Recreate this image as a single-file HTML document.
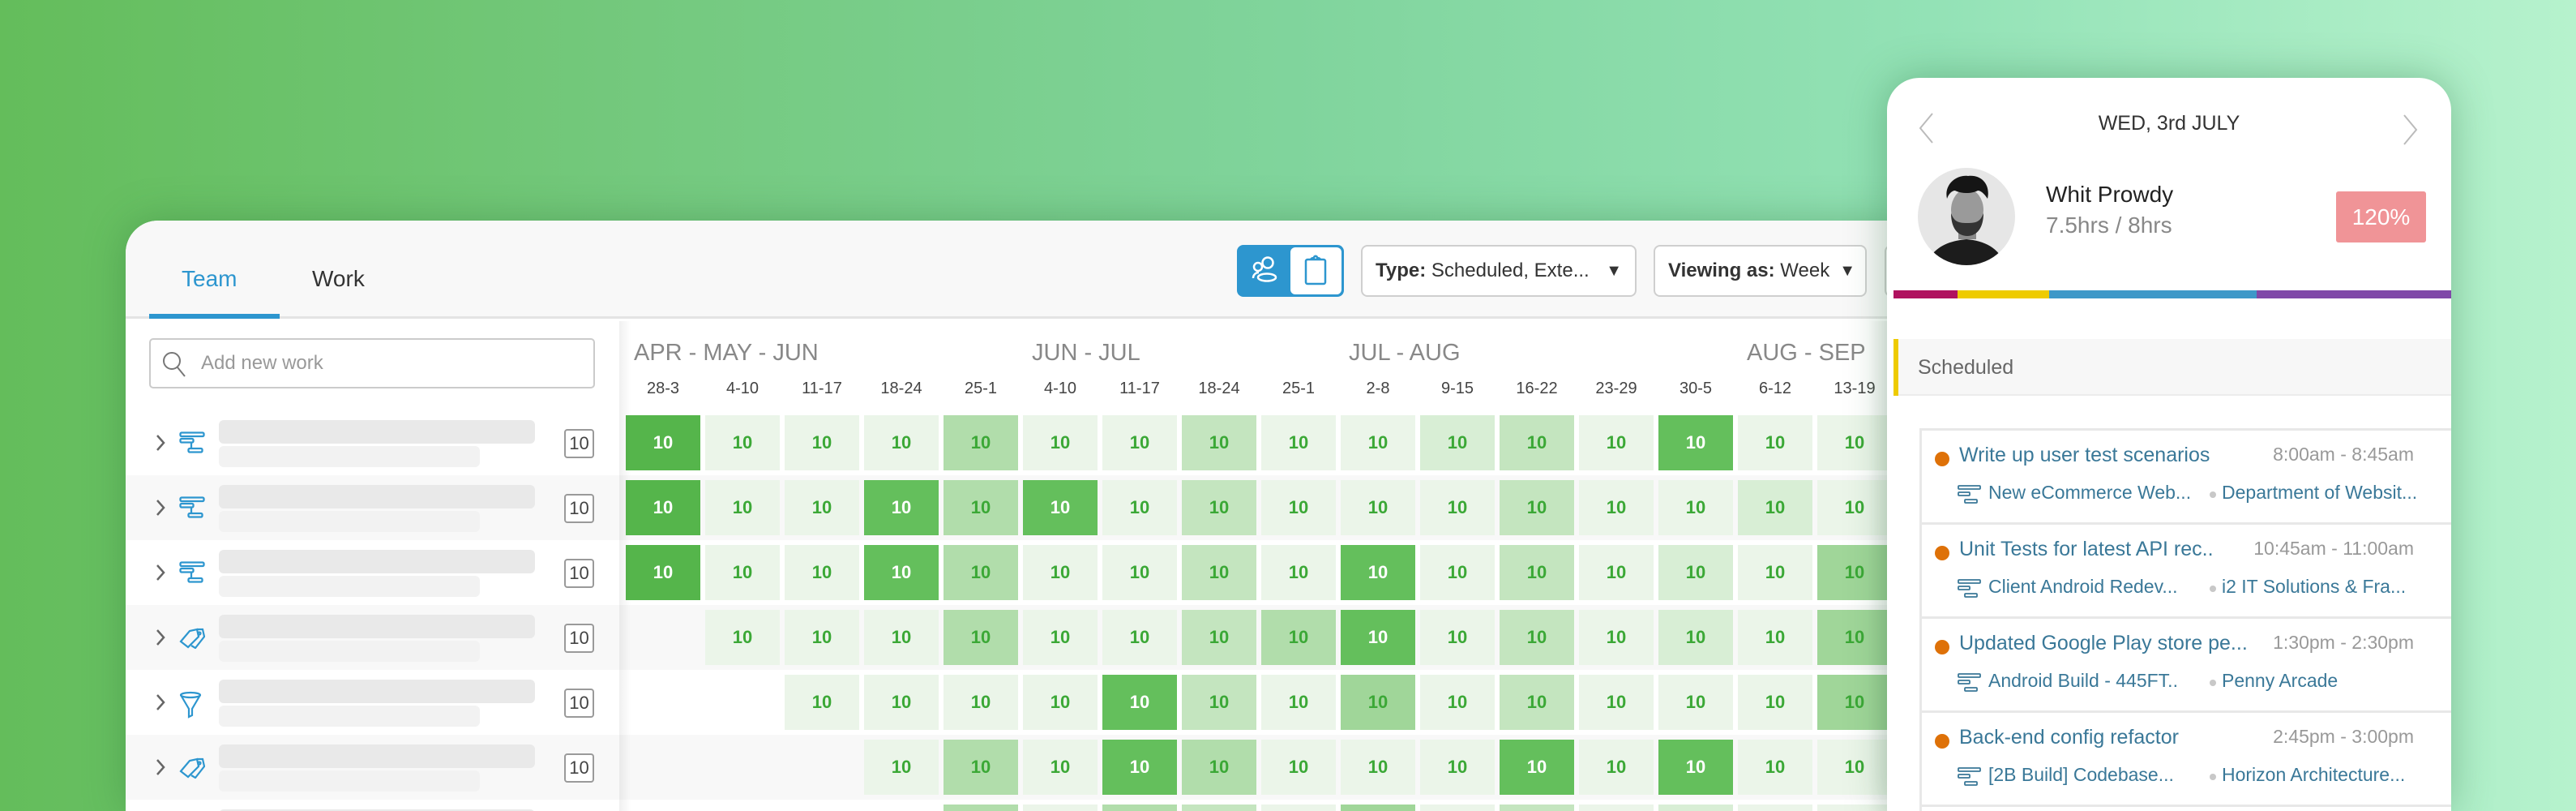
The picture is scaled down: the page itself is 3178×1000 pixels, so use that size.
<!DOCTYPE html>
<html><head><meta charset="utf-8">
<style>
*{margin:0;padding:0;box-sizing:border-box}
html,body{width:3178px;height:1000px;overflow:hidden}
body{position:relative;font-family:"Liberation Sans",sans-serif;background:linear-gradient(90deg,#64bd5b 0%,#74c97e 25%,#80d49c 50%,#93e2b6 75%,#b6f2cd 100%)}
.a{position:absolute}
#card{left:155px;top:272px;width:2200px;height:728px;background:#fff;border-radius:40px 0 0 0;overflow:hidden;box-shadow:0 0 50px rgba(40,110,50,.35)}
#hdr{left:0;top:0;width:2200px;height:121px;background:#f8f8f8;border-bottom:3px solid #e4e4e4}
.tab{font-size:28px;top:56px}
.row{left:0;width:2200px;height:80px}
.row.g{background:#f8f8f8}
.bar1{left:115px;top:12px;width:390px;height:29px;background:#e9e9e9;border-radius:6px}
.bar2{left:115px;top:44px;width:322px;height:26px;background:#f2f2f2;border-radius:6px}
.badge{left:541px;top:23px;width:37px;height:36px;border:2px solid #9a9a9a;border-radius:4px;font-size:22px;color:#444;text-align:center;line-height:32px;background:#fff}
.chev{left:36px;top:28px}
.ico{left:66px;top:26px}
#leftshade{left:609px;top:124px;width:14px;height:700px;background:linear-gradient(90deg,rgba(0,0,0,.06),rgba(0,0,0,0))}
.c{position:absolute;width:92px;height:68px;font-size:22px;font-weight:bold;text-align:center;line-height:68px;color:#3ba836}
.D{background:#55b54b;color:#fff}.G{background:#64bf5c;color:#fff}.M{background:#b1ddab}.N{background:#a0d699}.K{background:#c4e5bf}.J{background:#d8eed5}.L{background:#ebf5e9}
.mon{font-size:29px;color:#888;top:147px}
.wk{font-size:20px;color:#444;top:196px;width:98px;text-align:center}
.dd{top:30px;height:64px;border:2px solid #cfcfcf;border-radius:8px;background:#fff;font-size:24px;color:#333;line-height:60px;padding-left:16px;white-space:nowrap}
#panel{left:2328px;top:96px;width:696px;height:904px;background:#fff;border-radius:40px 40px 0 0;box-shadow:0 0 50px rgba(30,100,50,.35);overflow:hidden}
.it{left:40px;width:660px;height:116px;border-top:3px solid #e8e8e8;border-left:3px solid #e8e8e8}
.dot{left:16px;top:26px;width:18px;height:18px;border-radius:50%;background:#de7108}
.tt{left:46px;top:16px;font-size:25px;color:#3a7898}
.tm{right:50px;top:16px;font-size:23px;color:#999}
.sb{top:63px;font-size:23px;color:#3a7898}
.sd{left:355px;top:75px;width:8px;height:8px;border-radius:50%;background:#c8c8c8}
</style></head><body>

<div id="card" class="a">
  <div id="hdr" class="a">
    <div class="a tab" style="left:69px;color:#2d96cf">Team</div>
    <div class="a tab" style="left:230px;color:#333">Work</div>
    <div class="a" style="left:29px;top:115px;width:161px;height:6px;background:#2d96cf"></div>
    <div class="a" style="left:1371px;top:30px;width:132px;height:64px;border-radius:8px;background:#2d96cf"></div>
    <div class="a" style="left:1437px;top:33px;width:63px;height:58px;border-radius:6px;background:#fff"></div>
    <svg class="a" style="left:1388px;top:42px" width="34" height="40" viewBox="0 0 34 40" fill="none" stroke="#fff" stroke-width="2.5"><circle cx="9" cy="15" r="5"/><circle cx="21" cy="10" r="6.5"/><path d="M3 29c0-4 3-7 7-7"/><ellipse cx="20" cy="28" rx="11" ry="4.5"/></svg>
    <svg class="a" style="left:1453px;top:40px" width="30" height="44" viewBox="0 0 30 44" fill="none" stroke="#2d96cf" stroke-width="2.5"><rect x="3" y="8" width="24" height="30" rx="2"/><path d="M9 9c0-3 3-3 4-3c0-3 4-3 4 0c1 0 4 0 4 3"/></svg>
    <div class="a dd" style="left:1524px;width:340px"><b>Type:</b> Scheduled, Exte...<span style="position:absolute;right:16px;top:0;font-size:20px">▼</span></div>
    <div class="a dd" style="left:1885px;width:263px"><b>Viewing as:</b> Week<span style="position:absolute;right:12px;top:0;font-size:20px">▼</span></div>
    <div class="a dd" style="left:2170px;width:100px"></div>
  </div>
  <div class="a" style="left:29px;top:145px;width:550px;height:62px;border:2px solid #cbcbcb;border-radius:5px;background:#fff">
    <svg class="a" style="left:14px;top:14px" width="30" height="34" viewBox="0 0 30 34" fill="none" stroke="#777" stroke-width="2"><circle cx="12" cy="12" r="10"/><path d="M19 20l9 11"/></svg>
    <div class="a" style="left:62px;top:15px;font-size:24px;color:#999">Add new work</div>
  </div>

  <div id="rows"></div>
  <div class="a mon" style="left:627px">APR - MAY - JUN</div>
  <div class="a mon" style="left:1118px">JUN - JUL</div>
  <div class="a mon" style="left:1509px">JUL - AUG</div>
  <div class="a mon" style="left:2000px">AUG - SEP</div>
</div>

<div id="panel" class="a">
  <svg class="a" style="left:38px;top:42px" width="20" height="40" viewBox="0 0 20 40" fill="none" stroke="#bbb" stroke-width="2"><path d="M18 2L3 20l15 18"/></svg>
  <svg class="a" style="left:636px;top:44px" width="20" height="40" viewBox="0 0 20 40" fill="none" stroke="#bbb" stroke-width="2"><path d="M2 2l15 18L2 38"/></svg>
  <div class="a" style="left:0;width:696px;text-align:center;top:42px;font-size:25px;color:#333">WED, 3rd JULY</div>
  <svg class="a" style="left:38px;top:111px" width="120" height="120" viewBox="0 0 120 120"><defs><clipPath id="cp"><circle cx="60" cy="60" r="60"/></clipPath></defs><g clip-path="url(#cp)"><rect width="120" height="120" fill="#e6e6e6"/><path d="M10 120c8-22 28-30 50-32c22 2 40 10 48 32z" fill="#1c1c1c"/><rect x="50" y="60" width="22" height="28" fill="#8a8a8a"/><ellipse cx="61" cy="52" rx="20" ry="26" fill="#9a9a9a"/><path d="M41 56c0 18 8 28 20 28s20-10 20-28c-4 10-8 12-20 12s-16-2-20-12z" fill="#333"/><path d="M36 38c-4-18 12-30 26-28c16-2 28 10 24 28c-4-6-8-10-12-10c-8 4-20 4-28 0c-4 0-8 4-10 10z" fill="#151515"/></g></svg>
  <div class="a" style="left:196px;top:128px;font-size:28px;color:#222">Whit Prowdy</div>
  <div class="a" style="left:196px;top:166px;font-size:28px;color:#888">7.5hrs / 8hrs</div>
  <div class="a" style="left:554px;top:140px;width:111px;height:63px;background:#f09497;border-radius:3px;color:#fff;font-size:28px;text-align:center;line-height:63px">120%</div>
  <div class="a" style="left:8px;top:262px;width:79px;height:10px;background:#b0125f"></div>
  <div class="a" style="left:87px;top:262px;width:113px;height:10px;background:#eecb00"></div>
  <div class="a" style="left:200px;top:262px;width:256px;height:10px;background:#3e98c8"></div>
  <div class="a" style="left:456px;top:262px;width:240px;height:10px;background:#8048a8"></div>
  <div class="a" style="left:8px;top:322px;width:688px;height:70px;background:#f7f7f7;border-bottom:2px solid #ececec"></div>
  <div class="a" style="left:8px;top:322px;width:6px;height:70px;background:#eecb00"></div>
  <div class="a" style="left:38px;top:343px;font-size:25px;color:#666">Scheduled</div>

  <div id="items"></div>
</div>

<script>
(function(){
var pat=[
"DLLLMLLKLLJKLGLL",
"DLLGMGLKLLLKLLJL",
"DLLGMLLKLGLKLJLN",
"ELLLMLLKMGLKLJLN",
"EELLLLGKLNLKLLLN",
"EEELMLGMLLLGLGLL",
"EEEEMLMKLNLKLJLL"];
var wk=["28-3","4-10","11-17","18-24","25-1","4-10","11-17","18-24","25-1","2-8","9-15","16-22","23-29","30-5","6-12","13-19"];
var icons=[0,0,0,1,2,1,0];
var hier='<svg width="32" height="28" viewBox="0 0 32 28" fill="none" stroke="#2d96cf" stroke-width="2.3"><rect x="1.5" y="1.5" width="29" height="4.5" rx="1.5"/><rect x="1.5" y="9" width="16" height="4.5" rx="1.5"/><rect x="11.5" y="21" width="17" height="4.5" rx="1.5"/><path d="M15 13.5v7.5"/></svg>';
var tag='<svg width="32" height="28" viewBox="0 0 32 28" fill="none" stroke="#2d96cf" stroke-width="2.2"><path d="M11 26L2 19L13 6L22 4L24 13z"/><path d="M15 24L20 27L31 13L29 4L22 4"/><circle cx="25" cy="9" r="1.5"/></svg>';
var fun='<svg width="32" height="34" viewBox="0 0 32 34" fill="none" stroke="#2d96cf" stroke-width="2.2"><ellipse cx="14" cy="5" rx="12" ry="3"/><path d="M2 5L12 22V32L16 30V22L26 5"/></svg>';
var h='';
for(var r=0;r<7;r++){
 var ty=234+r*80;
 h+='<div class="a row'+(r%2?' g':'')+'" style="top:'+ty+'px">';
 h+='<svg class="a chev" width="14" height="24" viewBox="0 0 14 24" fill="none" stroke="#666" stroke-width="2.5"><path d="M3 3l8 9-8 9"/></svg>';
 h+='<div class="a ico">'+[hier,tag,fun][icons[r]]+'</div>';
 h+='<div class="a bar1"></div><div class="a bar2"></div><div class="a badge">10</div>';
 for(var i=0;i<16;i++){var k=pat[r][i];if(k=='E')continue;
  h+='<div class="c '+k+'" style="left:'+(617+i*98)+'px;top:6px">10</div>';}
 h+='</div>';
}
for(var i=0;i<16;i++)h+='<div class="a wk" style="left:'+(614+i*98)+'px">'+wk[i]+'</div>';
h+='<div id="leftshade" class="a"></div>';
h+='<div class="a" style="left:2150px;top:124px;width:50px;height:700px;background:linear-gradient(90deg,rgba(0,0,0,0),rgba(0,0,0,.1))"></div>';
document.getElementById('rows').outerHTML=h;
var its=[["Write up user test scenarios","8:00am - 8:45am","New eCommerce Web...","Department of Websit..."],
["Unit Tests for latest API rec..","10:45am - 11:00am","Client Android Redev...","i2 IT Solutions &amp; Fra..."],
["Updated Google Play store pe...","1:30pm - 2:30pm","Android Build - 445FT..","Penny Arcade"],
["Back-end config refactor","2:45pm - 3:00pm","[2B Build] Codebase...","Horizon Architecture..."],
["","","",""]];
var ih='';
var sm='<svg width="30" height="24" viewBox="0 0 30 24" fill="none" stroke="#3a7898" stroke-width="1.8"><rect x="1" y="1" width="27" height="4" rx="1"/><rect x="1" y="9" width="14" height="4" rx="1"/><rect x="9" y="18" width="15" height="4" rx="1"/></svg>';
for(var j=0;j<5;j++){var t=its[j];
 ih+='<div class="a it" style="top:'+(432+j*116)+'px">';
 if(t[0]){ih+='<div class="a dot"></div><div class="a tt">'+t[0]+'</div><div class="a tm">'+t[1]+'</div>';
 ih+='<div class="a" style="left:44px;top:67px">'+sm+'</div><div class="a sb" style="left:82px">'+t[2]+'</div><div class="a sd"></div><div class="a sb" style="left:370px">'+t[3]+'</div>';}
 ih+='</div>';
}
document.getElementById('items').outerHTML=ih;
})();
</script>
</body></html>
